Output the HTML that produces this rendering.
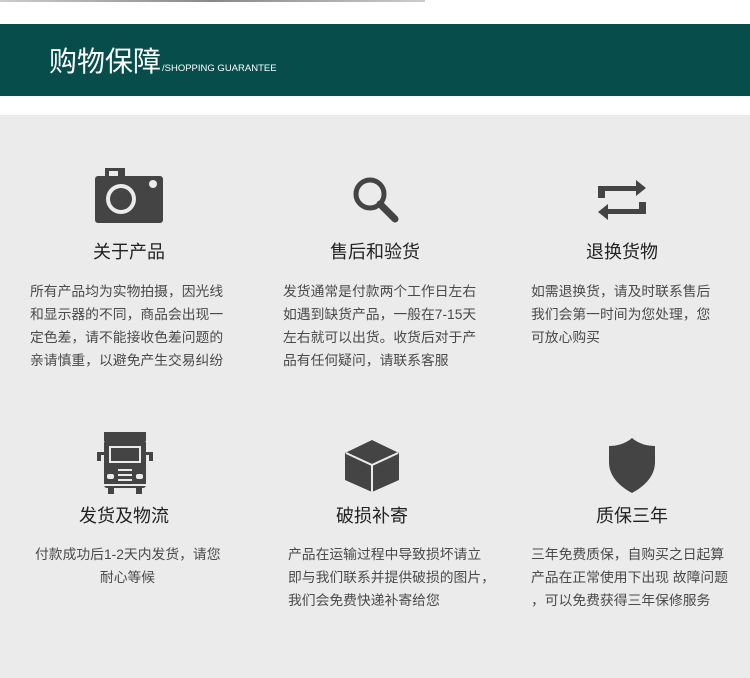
<!DOCTYPE html>
<html><head><meta charset="utf-8"><style>
*{margin:0;padding:0}
body{width:750px;height:678px;position:relative;background:#fff;font-family:"Liberation Sans","Noto Sans CJK SC",sans-serif;overflow:hidden}
.a{position:absolute}
.t{position:absolute;font-size:18px;color:#222;white-space:nowrap;transform:translateX(-50%)}
.p{position:absolute;font-size:13.8px;line-height:23px;color:#4a4a4a;white-space:nowrap}
</style></head><body>
<div class="a" style="left:0;top:0;width:425px;height:2px;background:linear-gradient(90deg,#ccc,#888,#ccc)"></div>
<div class="a" style="left:0;top:24px;width:750px;height:72px;background:#064d4c"></div>
<div class="a" style="left:49px;top:45px;color:#fff;font-size:28px;letter-spacing:0;line-height:34px">购物保障</div>
<div class="a" style="left:162px;top:63px;color:#fff;font-size:9.5px">/SHOPPING GUARANTEE</div>
<div class="a" style="left:0;top:115px;width:750px;height:563px;background:#ebebeb"></div>

<svg class="a" style="left:95px;top:168px" width="68" height="55" viewBox="0 0 68 55">
<rect x="10" y="0" width="20" height="10" fill="#444"/><rect x="14" y="3" width="9" height="6" fill="#ebebeb"/>
<rect x="0" y="8" width="68" height="47" rx="3" fill="#444"/>
<circle cx="26" cy="31" r="15" fill="#ebebeb"/><circle cx="26" cy="31" r="11" fill="#444"/>
<circle cx="58" cy="16" r="4" fill="#ebebeb"/></svg>
<svg class="a" style="left:352px;top:176px" width="48" height="48" viewBox="0 0 48 48">
<circle cx="18" cy="18" r="14" fill="none" stroke="#444" stroke-width="5"/>
<line x1="28" y1="28" x2="43" y2="43" stroke="#444" stroke-width="7" stroke-linecap="round"/></svg>
<svg class="a" style="left:596px;top:178px" width="52" height="44" viewBox="0 0 52 44">
<path d="M2 20V8H40V2L50 10L40 18V13H9V20Z M50 24V36H12V42L2 34L12 26V31H43V24Z" fill="#444"/></svg>
<svg class="a" style="left:97px;top:432px" width="56" height="64" viewBox="0 0 56 64">
<rect x="7" y="0" width="42" height="9" fill="#444"/>
<rect x="7" y="8" width="42" height="48" rx="3" fill="#444"/>
<rect x="12" y="14" width="32" height="17" fill="#ebebeb"/><rect x="14" y="16" width="28" height="13" fill="#444"/>
<rect x="0" y="20" width="4" height="9" fill="#444"/><rect x="52" y="20" width="4" height="9" fill="#444"/>
<rect x="3" y="20" width="4" height="3" fill="#444"/><rect x="49" y="20" width="4" height="3" fill="#444"/>
<rect x="10" y="42" width="7" height="5" rx="2" fill="#ebebeb"/><rect x="39" y="42" width="7" height="5" rx="2" fill="#ebebeb"/>
<rect x="21" y="37" width="14" height="2" fill="#ebebeb"/><rect x="21" y="42" width="14" height="2" fill="#ebebeb"/><rect x="21" y="47" width="14" height="2" fill="#ebebeb"/>
<rect x="7" y="52" width="42" height="2" fill="#ebebeb"/>
<rect x="11" y="56" width="6" height="6" fill="#444"/><rect x="39" y="56" width="6" height="6" fill="#444"/></svg>
<svg class="a" style="left:345px;top:440px" width="54" height="52" viewBox="0 0 54 52">
<path d="M27 0L54 13V40L27 52L0 40V13Z" fill="#444"/>
<path d="M1 13L27 25L53 13 M27 25V52" fill="none" stroke="#ebebeb" stroke-width="2"/></svg>
<svg class="a" style="left:609px;top:438px" width="46" height="55" viewBox="0 0 46 55">
<path d="M23 0C16 6 8 8 0 8V24C0 38 10 48 23 55C36 48 46 38 46 24V8C38 8 30 6 23 0Z" fill="#444"/></svg>

<div class="t" style="left:129px;top:238px">关于产品</div>
<div class="t" style="left:375px;top:238px">售后和验货</div>
<div class="t" style="left:622px;top:238px">退换货物</div>
<div class="t" style="left:124px;top:502px">发货及物流</div>
<div class="t" style="left:372px;top:502px">破损补寄</div>
<div class="t" style="left:632px;top:502px">质保三年</div>

<div class="p" style="left:30px;top:280px">所有产品均为实物拍摄，因光线<br>和显示器的不同，商品会出现一<br>定色差，请不能接收色差问题的<br>亲请慎重，以避免产生交易纠纷</div>
<div class="p" style="left:283px;top:280px">发货通常是付款两个工作日左右<br>如遇到缺货产品，一般在7-15天<br>左右就可以出货。收货后对于产<br>品有任何疑问，请联系客服</div>
<div class="p" style="left:531px;top:280px">如需退换货，请及时联系售后<br>我们会第一时间为您处理，您<br>可放心购买</div>
<div class="p" style="left:35px;top:543px;width:185px;text-align:center">付款成功后1-2天内发货，请您<br>耐心等候</div>
<div class="p" style="left:288px;top:543px">产品在运输过程中导致损坏请立<br>即与我们联系并提供破损的图片，<br>我们会免费快递补寄给您</div>
<div class="p" style="left:531px;top:543px">三年免费质保，自购买之日起算<br>产品在正常使用下出现 故障问题<br>，可以免费获得三年保修服务</div>
</body></html>
